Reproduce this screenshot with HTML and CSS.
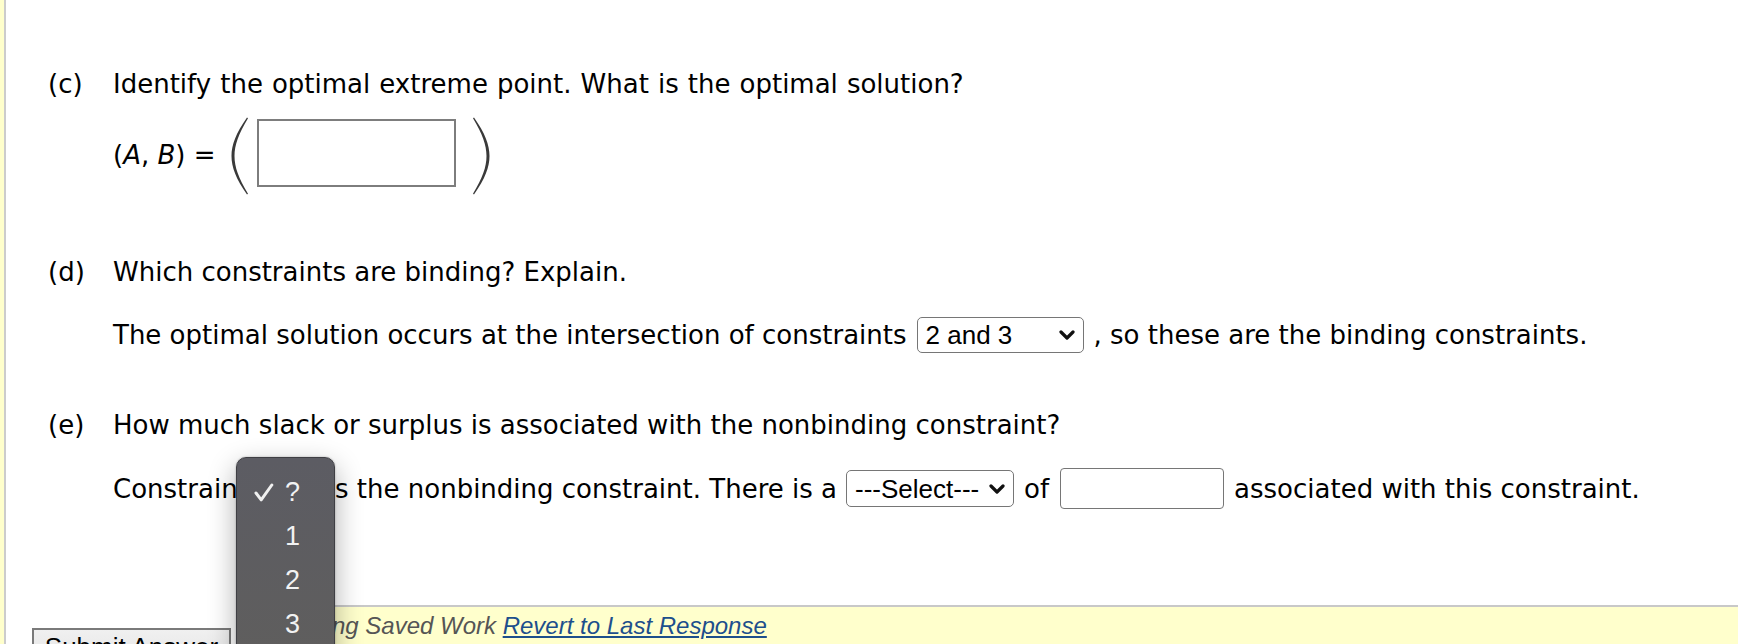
FILE: index.html
```html
<!DOCTYPE html>
<html lang="en">
<head>
<meta charset="utf-8">
<title>Linear programming question</title>
<link rel="stylesheet" href="styles.css">
</head>
<body>
<div class="frame">
  <div class="rail"></div>
  <main class="page">
    <section class="part part-c">
      <div class="part-head"><span class="lbl">(c)</span><span class="wide">Identify the optimal extreme point. What is the optimal solution?</span></div>
      <div class="part-body ab-row">
        <span class="ab-text">(<i>A</i>, <i>B</i>) =</span>
        <svg class="paren paren-l" width="20" height="78" viewBox="0 0 20 78"><path d="M19 0.5 C 8 16, 3.5 28, 3.5 39 C 3.5 50, 8 62, 19 77.5 L 20 76.8 C 10.5 61, 6.5 50, 6.5 39 C 6.5 28, 10.5 17, 20 1.2 Z"/></svg>
        <input class="ab-box" type="text">
        <svg class="paren paren-r" width="20" height="78" viewBox="0 0 20 78"><path d="M1 0.5 C 12 16, 16.5 28, 16.5 39 C 16.5 50, 12 62, 1 77.5 L 0 76.8 C 9.5 61, 13.5 50, 13.5 39 C 13.5 28, 9.5 17, 0 1.2 Z"/></svg>
      </div>
    </section>

    <section class="part part-d">
      <div class="part-head"><span class="lbl">(d)</span><span>Which constraints are binding? Explain.</span></div>
      <div class="part-body">
        <span class="txt">The optimal solution occurs at the intersection of constraints</span>
        <span class="sel-wrap sel-d">
          <select class="sel"><option>2 and 3</option></select>
          <svg class="chev" width="16" height="10" viewBox="0 0 16 10"><path d="M2 2 L8 8 L14 2"/></svg>
        </span>
        <span class="txt after-sel">, so these are the binding constraints.</span>
      </div>
    </section>

    <section class="part part-e">
      <div class="part-head"><span class="lbl">(e)</span><span>How much slack or surplus is associated with the nonbinding constraint?</span></div>
      <div class="part-body">
        <span class="txt">Constraint</span>
        <span class="sel-wrap sel-q">
          <select class="sel"><option>?</option></select>
        </span>
        <span class="txt gap-s">is the nonbinding constraint. There is a</span>
        <span class="sel-wrap sel-e">
          <select class="sel"><option>---Select---</option></select>
          <svg class="chev" width="16" height="10" viewBox="0 0 16 10"><path d="M2 2 L8 8 L14 2"/></svg>
        </span>
        <span class="txt gap-m">of</span>
        <input class="num" type="text">
        <span class="txt gap-n">associated with this constraint.</span>
      </div>
    </section>

    <footer class="foot">
      <button class="submit" type="button">Submit Answer</button>
      <div class="saved"><em>Viewing Saved Work</em> <a href="#">Revert to Last Response</a></div>
    </footer>
  </main>
</div>

<div class="popup" role="listbox">
  <div class="opt"><span class="chk"><svg width="20" height="19" viewBox="0 0 20 19"><path d="M2 10 L7.2 16.8 L17.8 2"/></svg></span><span>?</span></div>
  <div class="opt"><span class="chk"></span><span>1</span></div>
  <div class="opt"><span class="chk"></span><span>2</span></div>
  <div class="opt"><span class="chk"></span><span>3</span></div>
</div>
</body>
</html>
```

FILE: styles.css
```css
html, body {
  margin: 0;
  padding: 0;
}
body {
  font-family: "DejaVu Sans", Verdana, sans-serif;
  font-size: 26px;
  color: #000;
  background: #fff;
  overflow: hidden;
}
.frame {
  display: flex;
  min-height: 100vh;
}
.rail {
  width: 4px;
  flex: none;
  background: #ffffcc;
}
.page {
  flex: 1;
  border-left: 2px solid #cccccc;
  padding-top: 69px;
}
.part-head {
  display: flex;
  line-height: 30px;
  padding-left: 42px;
}
.lbl {
  width: 65px;
  flex: none;
}
.wide {
  word-spacing: 0.8px;
}
.part-body {
  display: flex;
  align-items: center;
  padding-left: 107px;
  line-height: 30px;
  white-space: nowrap;
}

/* (c) */
.ab-row {
  align-items: flex-start;
  margin-top: 18px;
  height: 78px;
}
.ab-text {
  margin-top: 23px;
}
.paren {
  flex: none;
}
.paren path {
  fill: #3a3a3a;
}
.paren-l {
  margin-left: 12px;
}
.ab-box {
  margin: 2px 0 0 9px;
  width: 199px;
  height: 68px;
  box-sizing: border-box;
  border: 2px solid #7d7d7d;
  border-radius: 0;
  padding: 0;
  background: #fff;
}
.paren-r {
  margin-left: 17px;
}

/* (d) */
.part-d {
  margin-top: 62px;
}
.part-d .part-body {
  margin-top: 30px;
  height: 36px;
}
.sel-wrap {
  position: relative;
  display: inline-flex;
  flex: none;
}
.sel {
  appearance: none;
  -webkit-appearance: none;
  box-sizing: border-box;
  font-family: "Liberation Sans", Arial, sans-serif;
  font-size: 26px;
  color: #000;
  background: #fff;
  border: 1.5px solid #767676;
  border-radius: 5px;
  padding: 0 0 0 8px;
  margin: 0;
}
.chev {
  position: absolute;
  right: 9px;
  top: 50%;
  margin-top: -5px;
  pointer-events: none;
}
.chev path {
  fill: none;
  stroke: #111;
  stroke-width: 3.2;
  stroke-linecap: round;
  stroke-linejoin: round;
}
.sel-d {
  margin-left: 10px;
}
.sel-d .sel {
  width: 167px;
  height: 36px;
}
.after-sel {
  margin-left: 10px;
}

/* (e) */
.part-e {
  margin-top: 57px;
}
.part-e .part-body {
  margin-top: 28px;
  height: 41px;
}
.sel-q {
  margin-left: 8px;
}
.sel-q .sel {
  width: 64px;
  height: 37px;
}
.gap-s {
  margin-left: 8px;
}
.sel-e {
  margin-left: 9px;
}
.sel-e .sel {
  width: 168px;
  height: 37px;
}
.gap-m {
  margin-left: 10px;
}
.num {
  margin-left: 11px;
  width: 164px;
  height: 41px;
  box-sizing: border-box;
  border: 1.5px solid #767676;
  border-radius: 4px;
  padding: 0;
  background: #fff;
  flex: none;
}
.gap-n {
  margin-left: 10px;
}

/* footer */
.foot {
  display: flex;
  align-items: flex-start;
  margin-top: 96px;
}
.submit {
  flex: none;
  margin: 23px 0 0 26px;
  width: 199px;
  height: 44px;
  box-sizing: border-box;
  padding: 0 0 6px;
  font-family: "Liberation Sans", Arial, sans-serif;
  font-size: 26px;
  line-height: 30px;
  color: #000;
  background: linear-gradient(#f0f0f0, #e3e3e3);
  border: 2px solid #7a7a7a;
  border-radius: 0;
}
.saved {
  flex: 1;
  margin-left: 9px;
  min-height: 60px;
  border-top: 2px solid #c8c8c8;
  background: #ffffcc;
  padding: 4px 0 0 35px;
  font-family: "Liberation Sans", Arial, sans-serif;
  font-size: 24px;
  line-height: 30px;
  color: #555;
  white-space: nowrap;
}
.saved em {
  font-style: italic;
}
.saved a {
  font-style: italic;
  color: #1d4f8c;
  text-decoration: underline;
}

/* native dropdown menu open over the page */
.popup {
  position: absolute;
  left: 236px;
  top: 457px;
  width: 99px;
  height: 210px;
  box-sizing: border-box;
  padding-top: 12px;
  border: 1px solid #3f3f44;
  border-radius: 10px;
  background: linear-gradient(#5c5c63, #5f5e5d);
  box-shadow: 0 10px 28px rgba(0, 0, 0, 0.32), 0 0 2px rgba(0, 0, 0, 0.3);
  font-family: "Liberation Sans", Arial, sans-serif;
  font-size: 27px;
  color: #f2f2f2;
}
.opt {
  height: 44px;
  display: flex;
  align-items: center;
  padding-left: 17px;
}
.chk {
  width: 31px;
  flex: none;
  display: flex;
  align-items: center;
}
.chk path {
  fill: none;
  stroke: #f0f0f0;
  stroke-width: 3;
  stroke-linecap: round;
  stroke-linejoin: round;
}
```
